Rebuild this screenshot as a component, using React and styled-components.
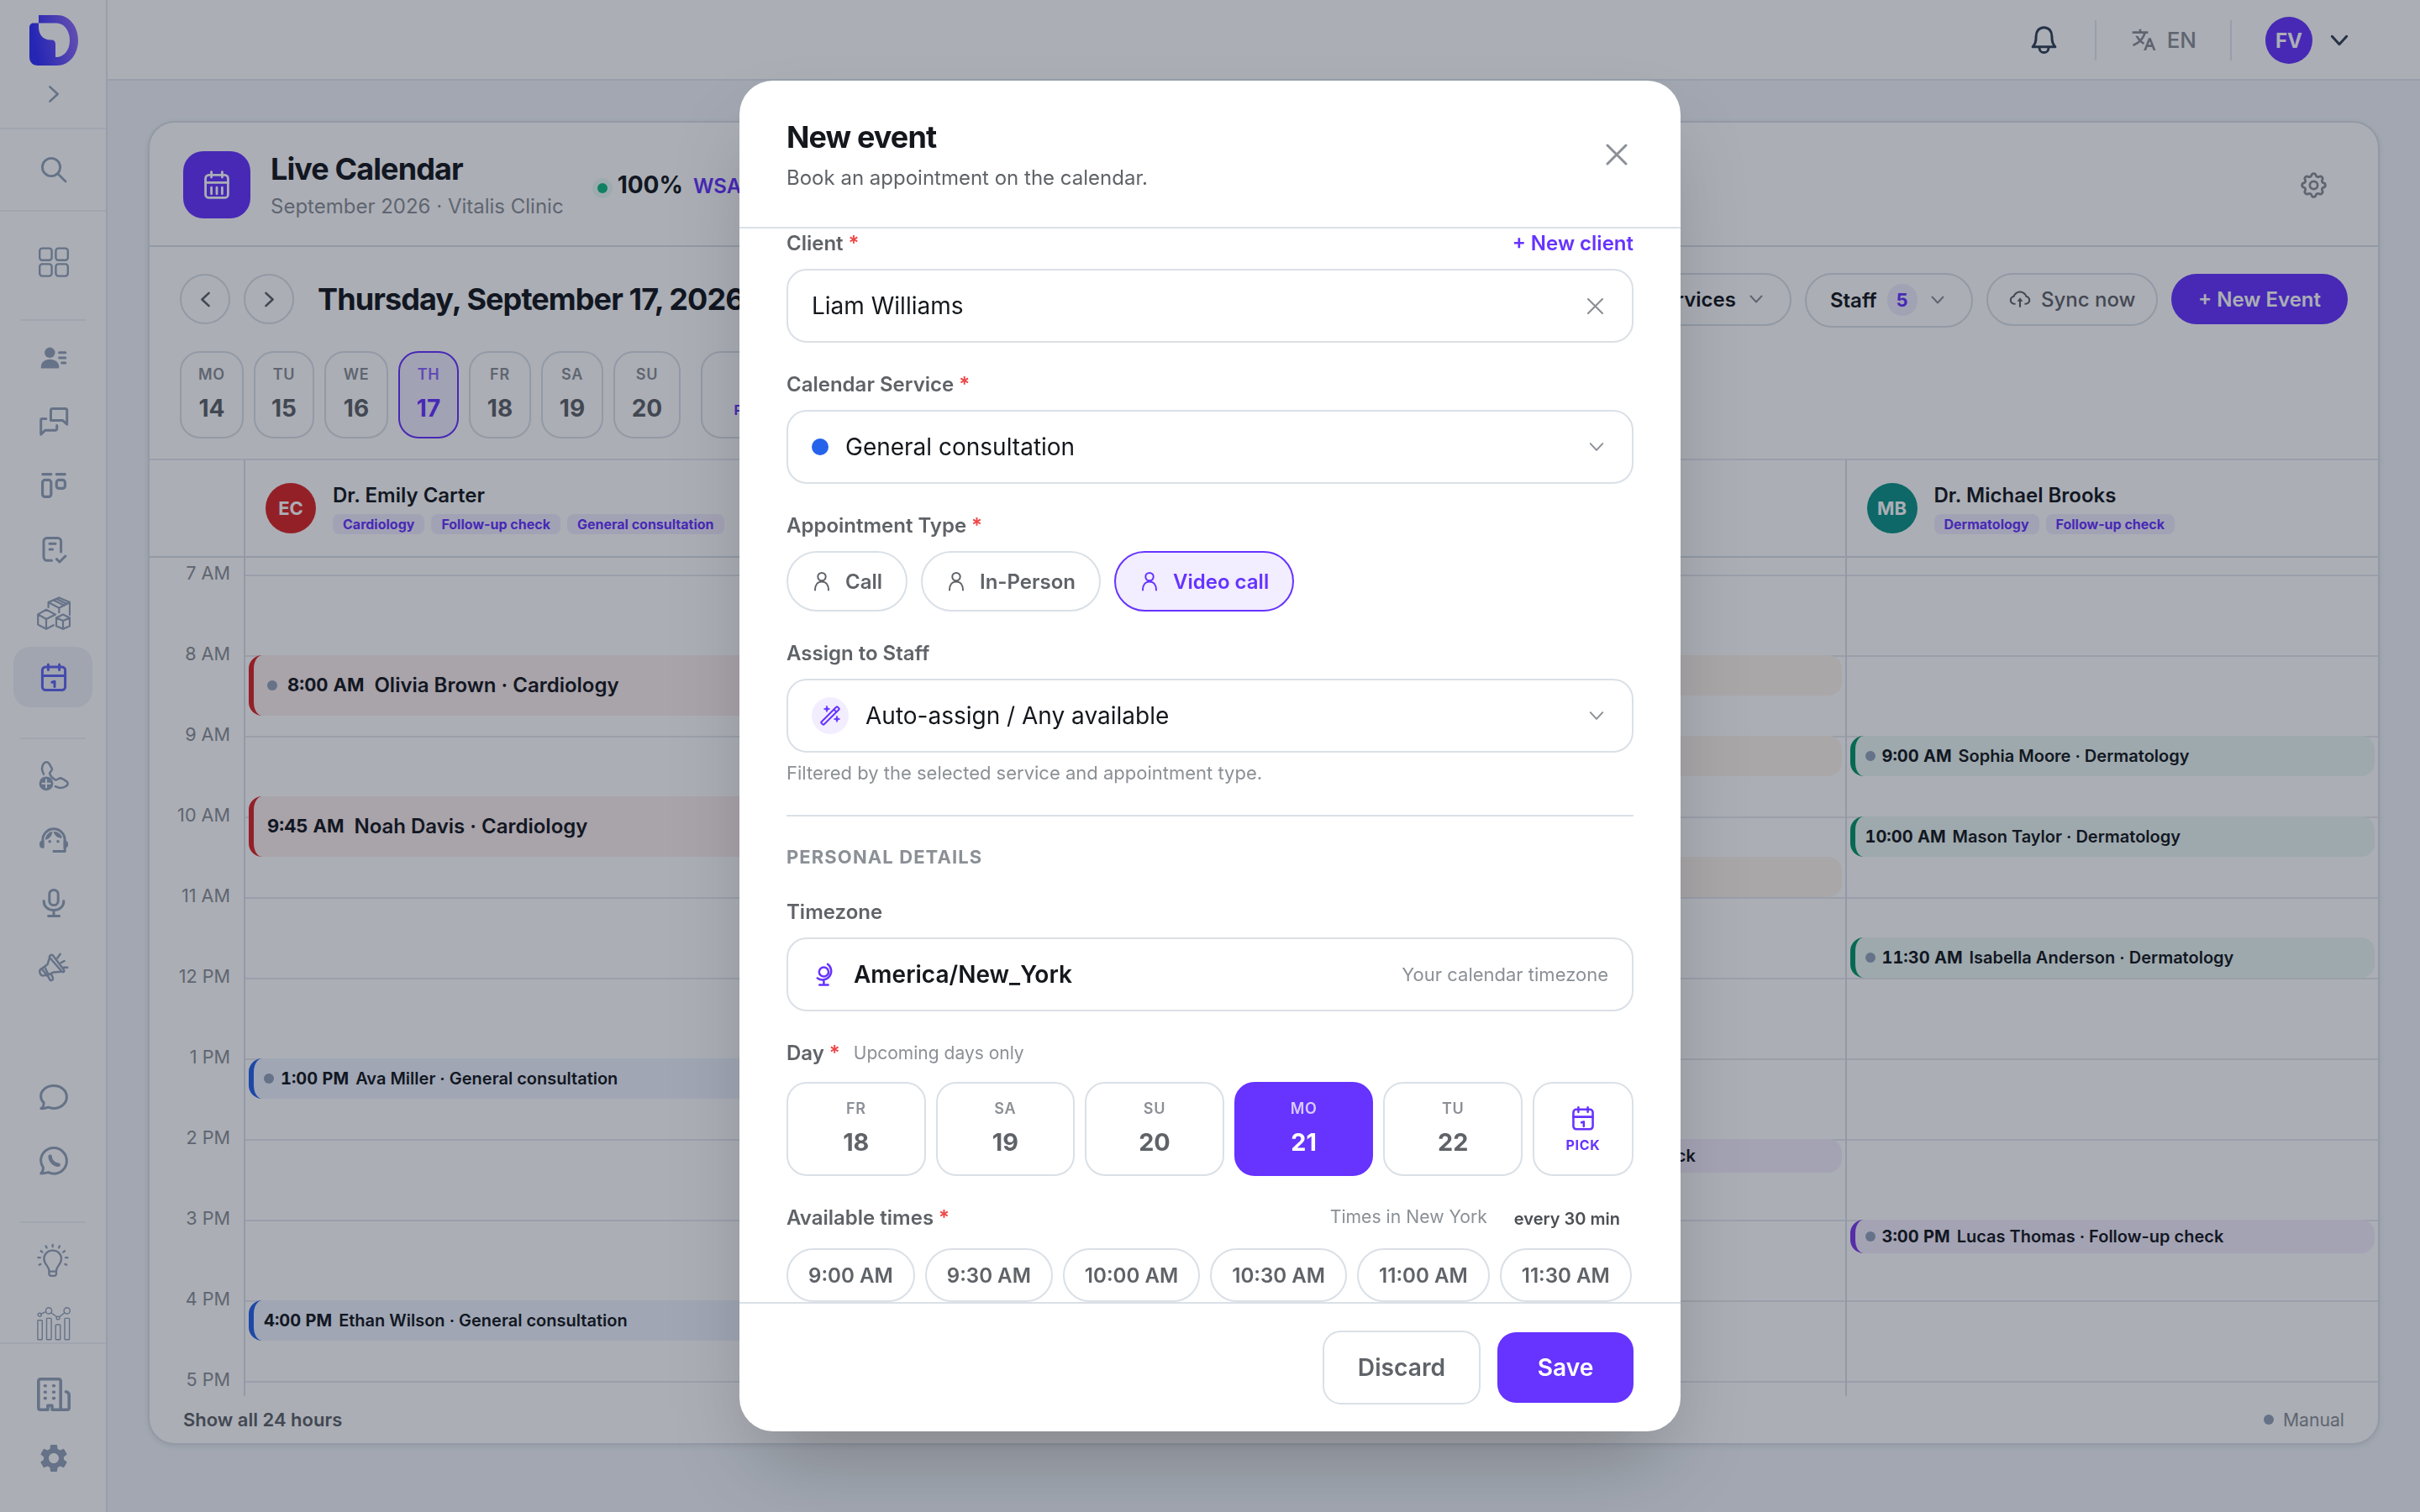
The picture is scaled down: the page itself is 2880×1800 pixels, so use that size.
import React from 'react';
import styled, { createGlobalStyle, css } from 'styled-components';
import { MdSettings } from 'react-icons/md';
import { RiTranslate2 } from 'react-icons/ri';
import { TbSettings } from 'react-icons/tb';
import { AiOutlineCloudUpload } from 'react-icons/ai';

const GlobalStyle = createGlobalStyle`
    * {
        box-sizing: border-box;
    }

    body {
        margin: 0;
        background: #f1f5f9;
        color: #14171c;
        font-family: Inter, "Liberation Sans", sans-serif;
        font-size: 24px;
        -webkit-font-smoothing: antialiased;
    }

    button {
        font: inherit;
        color: inherit;
        padding: 0;
        background: none;
        border: none;
    }

    svg {
        display: block;
        flex-shrink: 0;
    }
`;

const accent = '#6633ff';
const accentSoft = '#f2edff';
const line = '#dae0e6';
const lineSoft = '#e6e9ee';
const muted = '#8b9096';
const body = '#5f6368';

/* ---------- icons ---------- */

const Icon = ({ size = 40, box = 40, width = 3, color = 'currentColor', children }) => (
    <svg
        width={size}
        height={size}
        viewBox={`0 0 ${box} ${box}`}
        fill='none'
        stroke={color}
        strokeWidth={width}
        strokeLinecap='round'
        strokeLinejoin='round'>
        {children}
    </svg>
);

const SearchIcon = () => (
    <Icon width={2.8}>
        <circle cx='17' cy='17' r='10.6' />
        <path d='M25 25l9 9' />
    </Icon>
);

const GridIcon = () => (
    <Icon width={2.4}>
        <rect x='3.2' y='3.6' width='14.4' height='14.2' rx='3' />
        <rect x='22.4' y='3.6' width='14.4' height='14.2' rx='3' />
        <rect x='3.2' y='22.4' width='14.4' height='14.2' rx='3' />
        <rect x='22.4' y='22.4' width='14.4' height='14.2' rx='3' />
    </Icon>
);

const ContactIcon = () => (
    <Icon>
        <circle cx='15.3' cy='13.8' r='6.2' fill='currentColor' stroke='none' />
        <path d='M4.8 32.6v-2c0-5 4.6-8.8 10.6-8.8s10.8 3.8 10.8 8.8v1c0 .6-.4 1-1 1z' fill='currentColor' stroke='none' />
        <path d='M26.6 13.8h7.2M26.6 20h7.2M29.6 26h4.2' />
    </Icon>
);

const ChatsIcon = () => (
    <Icon>
        <path d='M16.5 18.6V6.4a2 2 0 0 1 2-2h15.2a2 2 0 0 1 2 2v16.8l-5-4.6z' />
        <path d='M10.8 16.4H6.5a1.8 1.8 0 0 0-1.8 1.8v17l5-5h12.2a1.8 1.8 0 0 0 1.8-1.8v-4' />
    </Icon>
);

const BoardIcon = () => (
    <Icon width={3.2}>
        <path d='M6.8 6.6h10M23.3 6.6h10' />
        <rect x='6.6' y='13.4' width='10.2' height='20' rx='3' />
        <rect x='23.2' y='13.4' width='10.2' height='10' rx='3' />
    </Icon>
);

const TaskIcon = () => (
    <Icon>
        <path d='M17.5 33.3H12a4 4 0 0 1-4-4V10.4a4 4 0 0 1 4-4h12.6a4 4 0 0 1 4 4V23' />
        <path d='M15 13.2h7M15 20h3.6M23.4 31.6l3.5 3.4 7-7' />
    </Icon>
);

const BoxesIcon = () => (
    <Icon width={2.2}>
        <path d='M13.6 13V7L26.3 1.4 39 7v15M13.6 7l12.7 6.8L39 7M26.3 13.8v5.4M19.6 4.4l13 6.4M22.8 2.8l13 6.2' />
        <path d='M22 21.6l-11-5.8-9.8 5.6v12.2L11 38.8l8.8-4.6M1.2 21.4L11 27l11-5.4M11 27v11.8' />
        <path d='M31 21.6l8 3.8v9.8l-8 3.6-8-3.6v-9.8zM23 25.4l8 3.6 8-3.6M31 29v9.8' />
    </Icon>
);

const CalendarIcon = ({ size, color, width = 3 }) => (
    <Icon size={size} color={color} width={width}>
        <rect x='6.4' y='8' width='27.2' height='27.6' rx='4' />
        <path d='M6.4 18.4h27.2M13.4 5v6.6M26.6 5v6.6M17.8 26.2l3.2-1v6.4' />
    </Icon>
);

const CallAddIcon = () => (
    <Icon width={2.5}>
        <path d='M8 17.6C5.6 13 5.6 8 8 5c2-2.4 4.6-2.4 6.2-.2 1.4 2 2.4 4 3.8 6.6.6 1.8-3.4 3.6-2.8 5.6.8 2.4 4.2 6 6.6 7.4 2 1 4.6-2.6 6.4-2.2 2.8 1 5.6 2.8 7.8 4.8 1.2 1.4.8 3.4-1.2 4.8-3.6 2.6-9 2.4-13 .4' />
        <circle cx='11' cy='28.8' r='8.4' fill='currentColor' stroke='none' />
        <path d='M11 24.2v9.2M6.4 28.8h9.2' stroke='#fff' strokeWidth='2' />
    </Icon>
);

const SupportIcon = () => (
    <Icon>
        <path d='M6.8 28V20.5C6.8 12.8 12.6 6.8 20 6.8s13.2 6 13.2 13.7v13H18.8' strokeLinecap='butt' />
        <path d='M8.6 20.6v9.2H7a4 4 0 0 1-4-4v-1.2a4 4 0 0 1 4-4zM31.6 20.6v9.2h1.6a3.8 3.8 0 0 0 3.8-4v-1.2a3.8 3.8 0 0 0-3.8-4z' fill='currentColor' stroke='none' />
        <circle cx='15.2' cy='21.8' r='1.8' fill='currentColor' stroke='none' />
        <circle cx='25' cy='21.8' r='1.8' fill='currentColor' stroke='none' />
        <path d='M10 20c0-5.2 3.4-9.2 8.4-10.2C18.2 15 15 18.6 10 20zM19.6 9.8c5 0 9.2 3 10.4 7.8-5 .6-9.4-2.6-10.4-7.8z' fill='currentColor' stroke='none' />
    </Icon>
);

const MicIcon = () => (
    <Icon>
        <rect x='14.8' y='3.4' width='10.4' height='18.2' rx='5.2' />
        <path d='M8.2 16.6v.6c0 6.2 5.2 10.4 11.8 10.4s11.8-4.2 11.8-10.4v-.6M20 28v6.2M13.6 34.4h13' />
    </Icon>
);

const MegaphoneIcon = () => (
    <Icon width={2.5}>
        <path d='M16 5.2c1-.8 2.4-.6 3.2.6L32 22.6c1.2 1.8-.6 3.4-2.2 2.2L15.4 8.2c-.8-1-.4-2.2.6-3z' />
        <path d='M15 8.2L12.6 16 5.4 21.4M29.2 24.8l-9.6.8-8.4 3.8' />
        <path d='M5.6 21.2c-2.6 1.4-2.8 3.2-2 5.2.8 1.8 2 3.6 4.4 3l3.4-.8zM9 19l4.6 9' />
        <path d='M12.8 29.4l2.4 4.8c1 1.8 3.8 1 3.8-1 0-1.6-1.6-4.4-2.4-5.8' />
        <path d='M24.3 8.4l3.4-4.6M28.6 14.2l4-2.2M31.6 19.8h4.6' />
    </Icon>
);

const BubbleIcon = () => (
    <Icon>
        <path d='M4.8 33.6c2.4-1 3.4-3.4 3.3-7C5.8 24.4 4.6 22 4.6 19.2 4.6 11.8 11.4 6.5 20 6.5s15.4 5.7 15.4 13.2S29 33.4 20 33.4c-2.6 0-4.6-.4-6.6-1.2-2.8 1-5.6 1.6-8.6 1.4z' />
    </Icon>
);

const WhatsappIcon = () => (
    <Icon>
        <path d='M4.8 35c1.6-1.4 2.8-3.6 2.6-7.2C5.6 25.2 4.6 22.4 4.6 19.6 4.6 11 11.5 4.6 20 4.6S35.4 11.4 35.4 20 28.5 35.2 20 35.2c-2.4 0-4.6-.6-6.6-1.6-2.8 1-5.6 1.4-8.6 1.4z' />
        <path d='M15.6 14.6c.2 5.6 4.6 9.8 10 10.2' strokeWidth='4.4' />
    </Icon>
);

const BulbIcon = () => (
    <Icon width={2.3}>
        <path d='M14.4 32.8c0-5.6-6-7.6-6-14.4 0-5.6 4.6-9.8 10.3-9.8S29 12.8 29 18.4c0 6.8-6 8.8-6 14.4v3.6a2.4 2.4 0 0 1-2.4 2.4h-3.8a2.4 2.4 0 0 1-2.4-2.4zM14.4 33.6H23' />
        <path d='M18.7 1.8v2.4M10.6 3.4l1 2M26.9 3.4l-1 2M4.6 9.3l1.8 1.3M33 9.3l-1.8 1.3M1.4 17.2h2.4M34 17.2h2.4M2.6 25.7l1.8-.8M35.2 25.7l-1.8-.8' />
    </Icon>
);

const ChartIcon = () => (
    <Icon width={1.4}>
        <rect x='.9' y='15.8' width='5.4' height='23' rx='.8' />
        <rect x='11.5' y='13.4' width='5.6' height='25.4' rx='.8' />
        <rect x='22.2' y='21' width='5.6' height='17.8' rx='.8' />
        <rect x='33' y='13.4' width='5.6' height='25.4' rx='.8' />
        <circle cx='3.2' cy='9.2' r='2' />
        <circle cx='14' cy='4.4' r='3.6' />
        <circle cx='25' cy='13' r='1.9' />
        <circle cx='35.7' cy='4.4' r='3.6' />
        <path d='M5 8.2l5.6-2.6M16.8 6.8l6.8 5M26.6 11.8l6.4-5' />
    </Icon>
);

const BuildingIcon = () => (
    <Icon width={3.6}>
        <path d='M13 38.2H4a2.2 2.2 0 0 1-2.2-2.2V4A2.2 2.2 0 0 1 4 1.8h22A2.2 2.2 0 0 1 28.2 4v34.2H18v-4.8h-5.2z' />
        <path d='M34.4 16.8c2.4.4 3.8 2 3.8 4.4V36a2.2 2.2 0 0 1-2.2 2.2h-8' />
        <path d='M9.4 9.7h.8M19.6 9.7h.8M9.4 17.2h.8M19.6 17.2h.8M9.4 24.6h.8M19.6 24.6h.8' />
    </Icon>
);

const BellIcon = () => (
    <Icon width={3} color='#334155'>
        <path d='M19.5 4.8c-6 0-9.4 4.6-9.4 10.4 0 7.2-1.4 9.2-4 12.6h26.8c-2.6-3.4-4-5.4-4-12.6C28.9 9.4 25.5 4.8 19.5 4.8z' />
        <path d='M14.1 29.2a5.4 5.4 0 0 0 10.8 0' />
    </Icon>
);

const MonthIcon = () => (
    <Icon size={34} box={34} width={2.8}>
        <rect x='3.6' y='5.4' width='26.8' height='27' rx='4' />
        <path d='M10.6 1.6v6.4M23.4 1.6v6.4M3.6 14.4h26.8' />
        <path d='M10.6 20.2v7.6M17 20.2v7.6M23.4 20.2v7.6' />
    </Icon>
);

const UserIcon = () => (
    <Icon size={24} box={24} width={2}>
        <circle cx='12' cy='6.6' r='4.7' />
        <path d='M4 22.4c0-6 3-10 8-10s8 4 8 10' />
    </Icon>
);

const WandIcon = () => (
    <Icon size={24} box={24} width={2}>
        <rect x='9.8' y='-1.6' width='4.4' height='27.2' rx='1.2' transform='rotate(45 12 12)' />
        <path d='M16.4 4.6l3 3' />
        <path d='M8 .4l1 2.6 2.6 1-2.6 1-1 2.6-1-2.6-2.6-1 2.6-1zM20 12.4l1 2.6 2.6 1-2.6 1-1 2.6-1-2.6-2.6-1 2.6-1z' fill='currentColor' strokeWidth='.8' />
    </Icon>
);

const GlobeIcon = () => (
    <Icon size={30} box={30} width={2.5} color={accent}>
        <circle cx='14.4' cy='12' r='5.6' />
        <path d='M19 2.8A10.3 10.3 0 0 1 6.8 19.4M14.4 22.6v4.8M9.2 27.6h10.4' />
    </Icon>
);

const Chevron = ({ dir = 'down', w = 14, stroke = 2, color }) => {
    const turn = { down: 0, left: 90, right: -90 }[dir];
    return (
        <Icon size={w + 4} box={18} width={(stroke * 18) / (w + 4)} color={color}>
            <path d='M2.5 5.5L9 12.5l6.5-7' transform={`rotate(${turn} 9 9)`} />
        </Icon>
    );
};

const CloseIcon = ({ size, width }) => (
    <Icon size={size} box={size} width={width} color={muted}>
        <path d={`M2 2l${size - 4} ${size - 4}M${size - 2} 2L2 ${size - 2}`} />
    </Icon>
);

const Logo = () => (
    <svg width='58' height='60' viewBox='0 0 58 60'>
        <defs>
            <linearGradient id='logo' x1='0' x2='1' y1='.6' y2='.4'>
                <stop offset='.1' stopColor='#332eff' />
                <stop offset='1' stopColor='#8f6cf8' />
            </linearGradient>
        </defs>
        <path
            fill='url(#logo)'
            fillRule='evenodd'
            d='M11 0h22c14 0 25 13 25 30S47 60 33 60H10C4 60 0 56 0 50V15c0-3.4 2-5.4 5-5.4h6zM11 9.6V14c0 9 5 15.5 14 15.5h1c3.2 0 5 1.8 5 5V50h1c9 0 16-8 16-20S41 9.6 32 9.6z'
        />
    </svg>
);

/* ---------- shell ---------- */

const Page = styled.div`
    display: flex;
    width: 2880px;
    height: 1800px;
    overflow: hidden;
`;

const Sidebar = styled.nav`
    display: flex;
    flex-direction: column;
    flex-shrink: 0;
    width: 128px;
    background: #fff;
    border-right: 2px solid #e2e8f0;
    color: #94a3b8;
`;

const Brand = styled.div`
    display: flex;
    flex-direction: column;
    align-items: center;
    gap: 22px;
    height: 154px;
    padding: 18px 0 0 2px;
    border-bottom: 2px solid #eef1f6;
`;

const SearchBox = styled.div`
    display: flex;
    justify-content: center;
    align-items: center;
    height: 98px;
    padding-left: 2px;
    border-bottom: 2px solid #eef1f6;
`;

const NavScroll = styled.div`
    display: flex;
    flex-direction: column;
    align-items: center;
    height: 1346px;
    padding-top: 24px;
    overflow: hidden;
`;

const NavBottom = styled.div`
    display: flex;
    flex-direction: column;
    align-items: center;
    padding-top: 24px;
    border-top: 2px solid #eef1f6;
`;

const NavItem = styled.div`
    display: flex;
    justify-content: center;
    align-items: center;
    flex-shrink: 0;
    width: 94px;
    height: 72px;
    margin-bottom: 4px;
    padding-left: 2px;
    border-radius: 20px;

    ${({ $active }) => $active && css`
        background: #eff1f8;
        color: #6366f1;
    `}
`;

const NavDivider = styled.div`
    flex-shrink: 0;
    width: 78px;
    height: 2px;
    margin: ${({ $top }) => $top}px 0 8px;
    background: #eef1f6;
`;

const NavGap = styled.div`
    flex-shrink: 0;
    height: 78px;
`;

const Main = styled.div`
    display: flex;
    flex-direction: column;
    flex: 1;
`;

const TopBar = styled.header`
    display: flex;
    justify-content: flex-end;
    align-items: center;
    height: 96px;
    padding: 2px 84px 0 0;
    background: #fff;
    border-bottom: 2px solid #e2e8f0;
`;

const TopSeparator = styled.span`
    width: 2px;
    height: 48px;
    margin: 0 40px;
    background: #e2e8f0;
`;

const Language = styled.div`
    display: flex;
    align-items: center;
    gap: 12px;
    font-size: 26px;
    font-weight: 500;
    line-height: 32px;
    padding-bottom: 1px;
    color: ${muted};
`;

const Avatar = styled.span`
    display: flex;
    justify-content: center;
    align-items: center;
    flex-shrink: 0;
    width: ${({ $size }) => $size}px;
    height: ${({ $size }) => $size}px;
    border-radius: 50%;
    background: ${({ $color }) => $color};
    color: #fff;
    font-size: ${({ $font }) => $font || 24}px;
    font-weight: 700;
`;

const UserMenu = styled.div`
    display: flex;
    align-items: center;
    gap: 20px;
`;

/* ---------- calendar card ---------- */

const Card = styled.section`
    display: flex;
    flex-direction: column;
    width: 2656px;
    height: 1576px;
    margin: 48px;
    background: #fff;
    border: 2px solid ${line};
    border-radius: 32px;
    box-shadow: 0 2px 6px rgba(15, 23, 42, 0.08);
    overflow: hidden;
`;

const CardHeader = styled.div`
    display: flex;
    align-items: center;
    height: 148px;
    padding: 2px 58px 0 40px;
    border-bottom: 2px solid ${line};
`;

const CardIcon = styled.div`
    display: flex;
    justify-content: center;
    align-items: center;
    width: 80px;
    height: 80px;
    margin-right: 24px;
    border-radius: 24px;
    background: ${accent};
    color: #fff;
`;

const CardTitle = styled.h1`
    margin: 0 0 7px;
    font-size: 36px;
    line-height: 44px;
    font-weight: 700;
    letter-spacing: -0.025em;
`;

const CardSubtitle = styled.div`
    font-size: 24px;
    line-height: 32px;
    color: ${muted};
`;

const Status = styled.div`
    display: flex;
    align-items: baseline;
    flex: 1;
    margin-left: 40px;
    font-size: 28px;
    font-weight: 700;
`;

const StatusDot = styled.span`
    align-self: center;
    width: 12px;
    height: 12px;
    margin: 8px 12px 0 0;
    border-radius: 50%;
    background: #10b981;
    box-shadow: 0 0 0 6px rgba(16, 185, 129, 0.08);
`;

const StatusTag = styled.span`
    margin-left: 12px;
    font-size: 24px;
    font-weight: 600;
    color: ${accent};
`;

const Toolbar = styled.div`
    height: 254px;
    padding: 32px 36px 0;
    border-bottom: 2px solid ${lineSoft};
`;

const ToolbarRow = styled.div`
    display: flex;
    align-items: center;
    height: 60px;
`;

const RoundButton = styled.button`
    display: flex;
    justify-content: center;
    align-items: center;
    width: 60px;
    height: 60px;
    margin-right: 16px;
    border: 2px solid ${line};
    border-radius: 50%;
    color: ${body};
`;

const DateTitle = styled.h2`
    flex: 1;
    margin: 0 0 0 12px;
    font-size: 36px;
    line-height: 44px;
    font-weight: 700;
    letter-spacing: -0.025em;
    white-space: nowrap;
`;

const Pills = styled.div`
    display: flex;
    align-items: center;
    gap: 16px;
`;

const Pill = styled.button`
    display: flex;
    align-items: center;
    height: ${({ $tall }) => ($tall ? 65 : 63)}px;
    margin-top: ${({ $tall }) => ($tall ? 2 : 0)}px;
    padding: 0 31px 0 28px;
    border: 2px solid ${line};
    border-radius: 33px;
    font-weight: 600;
`;

const SyncPill = styled(Pill)`
    gap: 11px;
    padding: 0 24.5px;
    color: ${body};
    font-weight: 500;
`;

const Count = styled.span`
    display: flex;
    justify-content: center;
    align-items: center;
    width: 36px;
    height: 38px;
    margin: 0 15px 0 12px;
    border-radius: 19px;
    background: ${accentSoft};
    color: ${accent};
    font-size: 22px;
    font-weight: 700;
`;

const PillLabel = styled.span`
    margin-right: ${({ $gap }) => $gap || 0}px;
`;

const NewEvent = styled.button`
    width: 210px;
    height: 60px;
    border-radius: 30px;
    background: ${accent};
    color: #fff;
    font-weight: 600;
`;

const Week = styled.div`
    display: flex;
    gap: 12px;
    margin-top: 32px;
`;

const Day = styled.div`
    display: flex;
    flex-direction: column;
    align-items: center;
    width: ${({ $width }) => $width}px;
    height: 104px;
    padding-top: 14px;
    border: 2px solid ${line};
    border-radius: 24px;
    color: ${body};

    ${({ $active }) => $active && css`
        border-color: ${accent};
        background: ${accentSoft};
        color: ${accent};
    `}

    small {
        font-size: 18px;
        line-height: 24px;
        font-weight: 600;
        letter-spacing: 0.04em;
        color: ${({ $active }) => ($active ? '#8c66ff' : muted)};
    }

    b {
        margin-top: 11px;
        font-size: 28px;
        line-height: 34px;
        font-weight: 700;
    }
`;

const PickDay = styled(Day)`
    width: 120px;
    margin-left: 12px;
    padding-top: 20px;
    color: ${accent};
    font-size: 16px;
    font-weight: 700;
    letter-spacing: 0.04em;
    gap: 4px;
`;

const StaffRow = styled.div`
    display: flex;
    height: 116px;
    border-bottom: 2px solid ${line};
`;

const Gutter = styled.div`
    flex-shrink: 0;
    width: 114px;
    border-right: 2px solid ${line};
`;

/* the gutter draws the first divider, so the first column has no border */
const columnBox = css`
    flex: 0 0 634.5px;
    min-width: 0;
    border-left: 2px solid ${line};

    &:nth-child(2) {
        border-left: none;
    }

    &:last-child {
        flex: 1;
    }
`;

const StaffCell = styled.div`
    ${columnBox}
    display: flex;
    align-items: center;
    gap: 20px;
    padding-left: 24px;
`;

const StaffName = styled.div`
    margin-bottom: 6px;
    line-height: 32px;
    font-weight: 600;
`;

const Tags = styled.div`
    display: flex;
    gap: 8px;
`;

const Tag = styled.span`
    padding: 0 12px;
    border-radius: 8px;
    background: ${accentSoft};
    color: ${accent};
    font-size: 16px;
    line-height: 24px;
    font-weight: 700;
    white-space: nowrap;
`;

const Schedule = styled.div`
    display: flex;
    height: 998px;
    overflow: hidden;
`;

const Hours = styled(Gutter)`
    padding: 6px 16px 0 0;
    text-align: right;
    color: ${muted};
    font-size: 21.6px;
`;

const HourLabel = styled.div`
    height: 96px;
    line-height: 24px;
`;

const Column = styled.div`
    ${columnBox}
    position: relative;
    padding-top: 20px;
`;

const HourRow = styled.div`
    height: 96px;
    border-top: 2px solid ${lineSoft};
`;

/* events lie over the hour rows of their column */
const EventBox = styled.div`
    position: absolute;
    left: 4px;
    right: 4px;
    display: flex;
    align-items: center;
    padding: 0 0 1px ${({ $large }) => ($large ? 16 : 12)}px;
    border-left: 6px solid ${({ $tone }) => tones[$tone].bar};
    border-radius: 16px;
    background: ${({ $tone }) => tones[$tone].bg};
    font-size: ${({ $large }) => ($large ? 24 : 20)}px;
    font-weight: 600;
    white-space: nowrap;
    overflow: hidden;

    time {
        margin: 0 ${({ $large }) => ($large ? 12 : 8)}px ${({ $large }) => ($large ? 2 : 0)}px 0;
        font-size: ${({ $large }) => ($large ? 22 : 20)}px;
        font-weight: 700;
        font-variant-numeric: tabular-nums;
    }
`;

const Dot = styled.span`
    flex-shrink: 0;
    width: ${({ $size }) => $size || 12}px;
    height: ${({ $size }) => $size || 12}px;
    margin-right: ${({ $gap }) => $gap}px;
    border-radius: 50%;
    background: ${({ $color }) => $color || '#94a3b8'};
`;

const CardFooter = styled.div`
    display: flex;
    justify-content: space-between;
    align-items: center;
    flex: 1;
    padding: 0 40px 1px;
    font-size: 22px;
    font-weight: 600;
    color: ${body};
`;

const Legend = styled.div`
    display: flex;
    align-items: center;
    font-size: 21.2px;
    font-weight: 400;
    color: ${muted};
`;

/* ---------- modal ---------- */

const Overlay = styled.div`
    position: fixed;
    inset: 0;
    display: flex;
    justify-content: center;
    align-items: center;
    width: 2880px;
    height: 1800px;
    background: rgba(15, 23, 42, 0.35);
`;

const Modal = styled.div`
    display: flex;
    flex-direction: column;
    width: 1120px;
    height: 1608px;
    border-radius: 40px;
    background: #fff;
    box-shadow: 0 50px 100px -24px rgba(0, 0, 0, 0.25);
    overflow: hidden;
`;

const ModalHeader = styled.div`
    display: flex;
    justify-content: space-between;
    align-items: center;
    flex-shrink: 0;
    height: 176px;
    padding: 2px 63px 0 56px;
    border-bottom: 2px solid ${line};
`;

const ModalTitle = styled.h2`
    margin: 0 0 11px;
    font-size: 36px;
    line-height: 44px;
    font-weight: 700;
    letter-spacing: -0.025em;
`;

const ModalText = styled.div`
    line-height: 32px;
    color: ${body};
`;

const ModalBody = styled.div`
    display: flex;
    flex-direction: column;
    gap: 32px;
    height: 1278px;
    padding: 0 56px;
    overflow: hidden;
`;

const FieldHead = styled.div`
    display: flex;
    align-items: center;
    height: 36px;
    margin-bottom: ${({ $gap }) => $gap || 12}px;
    padding-bottom: 2px;
    font-weight: 600;
    color: ${body};
`;

const Star = styled.span`
    margin-left: 6px;
    color: #ef4444;
`;

const LinkButton = styled.button`
    margin-left: auto;
    color: ${accent};
    font-weight: 600;
`;

const Hint = styled.span`
    font-size: ${({ $size }) => $size || 21}px;
    font-weight: 400;
    color: ${muted};
`;

const DayHint = styled(Hint)`
    margin-left: 16px;
`;

const ZoneHint = styled(Hint)`
    margin: -2px 32px 0 auto;
    font-size: 21.2px;
`;

const Step = styled.span`
    margin-right: 16px;
    padding-top: 3px;
    font-size: 20px;
    color: #4b4f54;
`;

const Control = styled.div`
    display: flex;
    align-items: center;
    height: 88px;
    padding: 0 28px;
    border: 2px solid ${line};
    border-radius: 24px;
    font-size: 28px;
`;

const ControlText = styled.span`
    flex: 1;
    margin-left: ${({ $left }) => $left || 0}px;
    font-weight: ${({ $bold }) => ($bold ? 600 : 400)};
`;

const ControlEnd = styled.span`
    margin-right: ${({ $right }) => $right}px;
`;

const WandBadge = styled.span`
    display: flex;
    justify-content: center;
    align-items: center;
    width: 44px;
    height: 44px;
    border-radius: 50%;
    background: ${accentSoft};
    color: ${accent};
`;

const Chips = styled.div`
    display: flex;
    gap: 16px;
`;

const Chip = styled.button`
    display: flex;
    align-items: center;
    gap: 16px;
    height: 72px;
    padding: 0 28px;
    border: 2px solid ${line};
    border-radius: 36px;
    color: ${body};
    font-size: 24px;
    font-weight: 600;

    ${({ $active }) => $active && css`
        border-color: ${accent};
        background: ${accentSoft};
        color: ${accent};
    `}
`;

const FieldHint = styled.div`
    height: 34px;
    margin-top: 8px;
    font-size: 22px;
    line-height: 33px;
    color: ${muted};
`;

const Rule = styled.div`
    flex-shrink: 0;
    height: 2px;
    background: ${line};
`;

const SectionTitle = styled.div`
    font-size: 22px;
    line-height: 32px;
    font-weight: 700;
    letter-spacing: 0.05em;
    color: ${muted};
`;

const Days = styled.div`
    display: flex;
    gap: 12px;
`;

const DayCard = styled.button`
    display: flex;
    flex-direction: column;
    align-items: center;
    flex: 1;
    height: 112px;
    padding-top: 18px;
    border: 2px solid ${({ $active }) => ($active ? accent : line)};
    border-radius: 24px;
    background: ${({ $active }) => ($active ? accent : '#fff')};
    color: ${({ $active }) => ($active ? '#fff' : body)};

    small {
        font-size: 18px;
        line-height: 24px;
        font-weight: 600;
        letter-spacing: 0.04em;
        color: ${({ $active }) => ($active ? 'rgba(255, 255, 255, 0.75)' : muted)};
    }

    b {
        margin-top: 10px;
        font-size: 28.8px;
        line-height: 36px;
        font-weight: 700;
    }
`;

const PickCard = styled(DayCard)`
    flex: none;
    width: 120px;
    padding-top: 24px;
    gap: 3px;
    color: ${accent};
    font-size: 16px;
    line-height: 24px;
    font-weight: 700;
    letter-spacing: 0.04em;
`;

const Times = styled.div`
    display: flex;
    gap: 12px;
`;

const TimeChip = styled.button`
    height: 64px;
    padding: 0 24px;
    border: 2px solid ${line};
    border-radius: 32px;
    color: ${body};
    font-size: 24.1px;
    font-weight: 600;
    white-space: nowrap;
`;

const ModalFooter = styled.div`
    display: flex;
    justify-content: flex-end;
    align-items: center;
    gap: 20px;
    flex: 1;
    padding: 0 56px;
    border-top: 2px solid ${line};
    font-size: 28.2px;
    font-weight: 600;
`;

const Discard = styled.button`
    width: 188px;
    height: 88px;
    border: 2px solid ${line};
    border-radius: 22px;
    color: ${body};
`;

const Save = styled.button`
    width: 162px;
    height: 84px;
    border-radius: 22px;
    background: ${accent};
    color: #fff;
`;

/* ---------- data ---------- */

const tones = {
    red: { bar: '#dc2626', bg: '#fceeee' },
    blue: { bar: '#2563eb', bg: '#eef3fd' },
    green: { bar: '#059669', bg: '#ebf7f3' },
    purple: { bar: '#7c3aed', bg: '#f5effe' },
    orange: { bar: '#d97706', bg: '#fcf4eb' },
};

const week = [
    ['MO', 14, 76], ['TU', 15, 72], ['WE', 16, 76], ['TH', 17, 72],
    ['FR', 18, 74], ['SA', 19, 74], ['SU', 20, 80],
];

const hours = ['7 AM', '8 AM', '9 AM', '10 AM', '11 AM', '12 PM', '1 PM', '2 PM', '3 PM', '4 PM', '5 PM'];

const staff = [
    {
        name: 'Dr. Emily Carter',
        initials: 'EC',
        color: '#dc2626',
        tags: ['Cardiology', 'Follow-up check', 'General consultation'],
        events: [
            { start: 8, min: 45, time: '8:00 AM', text: 'Olivia Brown · Cardiology', tone: 'red', dot: true },
            { start: 9.75, min: 45, time: '9:45 AM', text: 'Noah Davis · Cardiology', tone: 'red' },
            { start: 13, min: 30, time: '1:00 PM', text: 'Ava Miller · General consultation', tone: 'blue', dot: true },
            { start: 16, min: 30, time: '4:00 PM', text: 'Ethan Wilson · General consultation', tone: 'blue' },
        ],
    },
    { events: [] },
    {
        events: [
            { start: 8, min: 30, tone: 'orange' },
            { start: 9, min: 30, tone: 'orange' },
            { start: 10.5, min: 30, tone: 'orange' },
            { start: 14, min: 25, time: '2:00 PM', text: 'Daniel Jackson · Follow-up check', tone: 'purple', dot: true },
        ],
    },
    {
        name: 'Dr. Michael Brooks',
        initials: 'MB',
        color: '#0d9488',
        tags: ['Dermatology', 'Follow-up check'],
        events: [
            { start: 9, min: 30, time: '9:00 AM', text: 'Sophia Moore · Dermatology', tone: 'green', dot: true },
            { start: 10, min: 30, time: '10:00 AM', text: 'Mason Taylor · Dermatology', tone: 'green' },
            { start: 11.5, min: 30, time: '11:30 AM', text: 'Isabella Anderson · Dermatology', tone: 'green', dot: true },
            { start: 15, min: 25, time: '3:00 PM', text: 'Lucas Thomas · Follow-up check', tone: 'purple', dot: true },
        ],
    },
];

const days = [['FR', 18], ['SA', 19], ['SU', 20], ['MO', 21], ['TU', 22]];
const times = ['9:00 AM', '9:30 AM', '10:00 AM', '10:30 AM', '11:00 AM', '11:30 AM'];

/* ---------- parts ---------- */

const Event = ({ start, min, time, text, tone, dot }) => {
    const large = min >= 45;
    return (
        <EventBox
            $large={large}
            $tone={tone}
            style={{ top: 20 + (start - 7) * 96, height: min * 1.6 }}>
            {dot ? <Dot $gap={large ? 12 : 8} /> : null}
            {time ? <time>{time}</time> : null}
            {text}
        </EventBox>
    );
};

const Nav = () => (
    <Sidebar>
        <Brand>
            <Logo />
            <Chevron dir='right' w={20} stroke={2.6} />
        </Brand>
        <SearchBox><SearchIcon /></SearchBox>
        <NavScroll>
            <NavItem><GridIcon /></NavItem>
            <NavDivider $top={28} />
            <NavItem><ContactIcon /></NavItem>
            <NavItem><ChatsIcon /></NavItem>
            <NavItem><BoardIcon /></NavItem>
            <NavItem><TaskIcon /></NavItem>
            <NavItem><BoxesIcon /></NavItem>
            <NavItem $active><CalendarIcon /></NavItem>
            <NavDivider $top={32} />
            <NavItem><CallAddIcon /></NavItem>
            <NavItem><SupportIcon /></NavItem>
            <NavItem><MicIcon /></NavItem>
            <NavItem><MegaphoneIcon /></NavItem>
            <NavGap />
            <NavItem><BubbleIcon /></NavItem>
            <NavItem><WhatsappIcon /></NavItem>
            <NavDivider $top={32} />
            <NavItem><BulbIcon /></NavItem>
            <NavItem><ChartIcon /></NavItem>
        </NavScroll>
        <NavBottom>
            <NavItem><BuildingIcon /></NavItem>
            <NavItem><MdSettings size={40} /></NavItem>
        </NavBottom>
    </Sidebar>
);

const Header = () => (
    <TopBar>
        <BellIcon />
        <TopSeparator />
        <Language>
            <RiTranslate2 size={32} />
            EN
        </Language>
        <TopSeparator />
        <UserMenu>
            <Avatar $size={56} $color={accent}>FV</Avatar>
            <Chevron w={20} stroke={3} color='#334155' />
        </UserMenu>
    </TopBar>
);

const Calendar = () => (
    <Card>
        <CardHeader>
            <CardIcon><MonthIcon /></CardIcon>
            <div>
                <CardTitle>Live Calendar</CardTitle>
                <CardSubtitle>September 2026 · Vitalis Clinic</CardSubtitle>
            </div>
            <Status>
                <StatusDot />
                100%
                <StatusTag>WSA</StatusTag>
            </Status>
            <TbSettings size={37} color={muted} strokeWidth={1.8} />
        </CardHeader>
        <Toolbar>
            <ToolbarRow>
                <RoundButton><Chevron dir='left' w={17} stroke={2.6} /></RoundButton>
                <RoundButton><Chevron dir='right' w={17} stroke={2.6} /></RoundButton>
                <DateTitle>Thursday, September 17, 2026</DateTitle>
                <Pills>
                    <Pill>
                        <PillLabel $gap={15}>Services</PillLabel>
                        <Chevron color={muted} />
                    </Pill>
                    <Pill $tall>
                        Staff
                        <Count>5</Count>
                        <Chevron color={muted} />
                    </Pill>
                    <SyncPill>
                        <AiOutlineCloudUpload size={28} />
                        Sync now
                    </SyncPill>
                    <NewEvent>+ New Event</NewEvent>
                </Pills>
            </ToolbarRow>
            <Week>
                {week.map(([name, num, width]) => (
                    <Day key={name} $width={width} $active={num === 17}>
                        <small>{name}</small>
                        <b>{num}</b>
                    </Day>
                ))}
                <PickDay>
                    <CalendarIcon size={34} />
                    PICK
                </PickDay>
            </Week>
        </Toolbar>
        <StaffRow>
            <Gutter />
            {staff.map(({ name, initials, color, tags }, i) => (
                <StaffCell key={i}>
                    {name ? (
                        <>
                            <Avatar $size={60} $font={22} $color={color}>{initials}</Avatar>
                            <div>
                                <StaffName>{name}</StaffName>
                                <Tags>
                                    {tags.map((tag) => <Tag key={tag}>{tag}</Tag>)}
                                </Tags>
                            </div>
                        </>
                    ) : null}
                </StaffCell>
            ))}
        </StaffRow>
        <Schedule>
            <Hours>
                {hours.map((hour) => <HourLabel key={hour}>{hour}</HourLabel>)}
            </Hours>
            {staff.map(({ events }, i) => (
                <Column key={i}>
                    {hours.map((hour) => <HourRow key={hour} />)}
                    {events.map((event) => <Event key={event.start} {...event} />)}
                </Column>
            ))}
        </Schedule>
        <CardFooter>
            Show all 24 hours
            <Legend>
                <Dot $gap={11} />
                Manual
            </Legend>
        </CardFooter>
    </Card>
);

const EventModal = () => (
    <Overlay>
        <Modal>
            <ModalHeader>
                <div>
                    <ModalTitle>New event</ModalTitle>
                    <ModalText>Book an appointment on the calendar.</ModalText>
                </div>
                <CloseIcon size={26} width={3} />
            </ModalHeader>
            <ModalBody>
                <div>
                    <FieldHead>
                        Client<Star>*</Star>
                        <LinkButton>+ New client</LinkButton>
                    </FieldHead>
                    <Control>
                        <ControlText>Liam Williams</ControlText>
                        <ControlEnd $right={5}><CloseIcon size={21} width={2.2} /></ControlEnd>
                    </Control>
                </div>
                <div>
                    <FieldHead>Calendar Service<Star>*</Star></FieldHead>
                    <Control>
                        <Dot $size={20} $gap={0} $color='#2563eb' />
                        <ControlText $left={20}>General consultation</ControlText>
                        <ControlEnd $right={4}><Chevron w={16} color={muted} /></ControlEnd>
                    </Control>
                </div>
                <div>
                    <FieldHead>Appointment Type<Star>*</Star></FieldHead>
                    <Chips>
                        <Chip><UserIcon />Call</Chip>
                        <Chip><UserIcon />In-Person</Chip>
                        <Chip $active><UserIcon />Video call</Chip>
                    </Chips>
                </div>
                <div>
                    <FieldHead>Assign to Staff</FieldHead>
                    <Control>
                        <WandBadge><WandIcon /></WandBadge>
                        <ControlText $left={20}>Auto-assign / Any available</ControlText>
                        <ControlEnd $right={4}><Chevron w={16} color={muted} /></ControlEnd>
                    </Control>
                    <FieldHint>Filtered by the selected service and appointment type.</FieldHint>
                </div>
                <Rule />
                <SectionTitle>PERSONAL DETAILS</SectionTitle>
                <div>
                    <FieldHead>Timezone</FieldHead>
                    <Control>
                        <GlobeIcon />
                        <ControlText $left={20} $bold>America/New_York</ControlText>
                        <Hint $size={22}>Your calendar timezone</Hint>
                    </Control>
                </div>
                <div>
                    <FieldHead $gap={16}>
                        Day<Star>*</Star>
                        <DayHint>Upcoming days only</DayHint>
                    </FieldHead>
                    <Days>
                        {days.map(([name, num]) => (
                            <DayCard key={num} $active={num === 21}>
                                <small>{name}</small>
                                <b>{num}</b>
                            </DayCard>
                        ))}
                        <PickCard>
                            <CalendarIcon size={34} />
                            PICK
                        </PickCard>
                    </Days>
                </div>
                <div>
                    <FieldHead $gap={18}>
                        Available times<Star>*</Star>
                        <ZoneHint>Times in New York</ZoneHint>
                        <Step>every 30 min</Step>
                    </FieldHead>
                    <Times>
                        {times.map((time) => <TimeChip key={time}>{time}</TimeChip>)}
                    </Times>
                </div>
            </ModalBody>
            <ModalFooter>
                <Discard>Discard</Discard>
                <Save>Save</Save>
            </ModalFooter>
        </Modal>
    </Overlay>
);

export default function App() {
    return (
        <>
            <GlobalStyle />
            <Page>
                <Nav />
                <Main>
                    <Header />
                    <Calendar />
                </Main>
            </Page>
            <EventModal />
        </>
    );
}
